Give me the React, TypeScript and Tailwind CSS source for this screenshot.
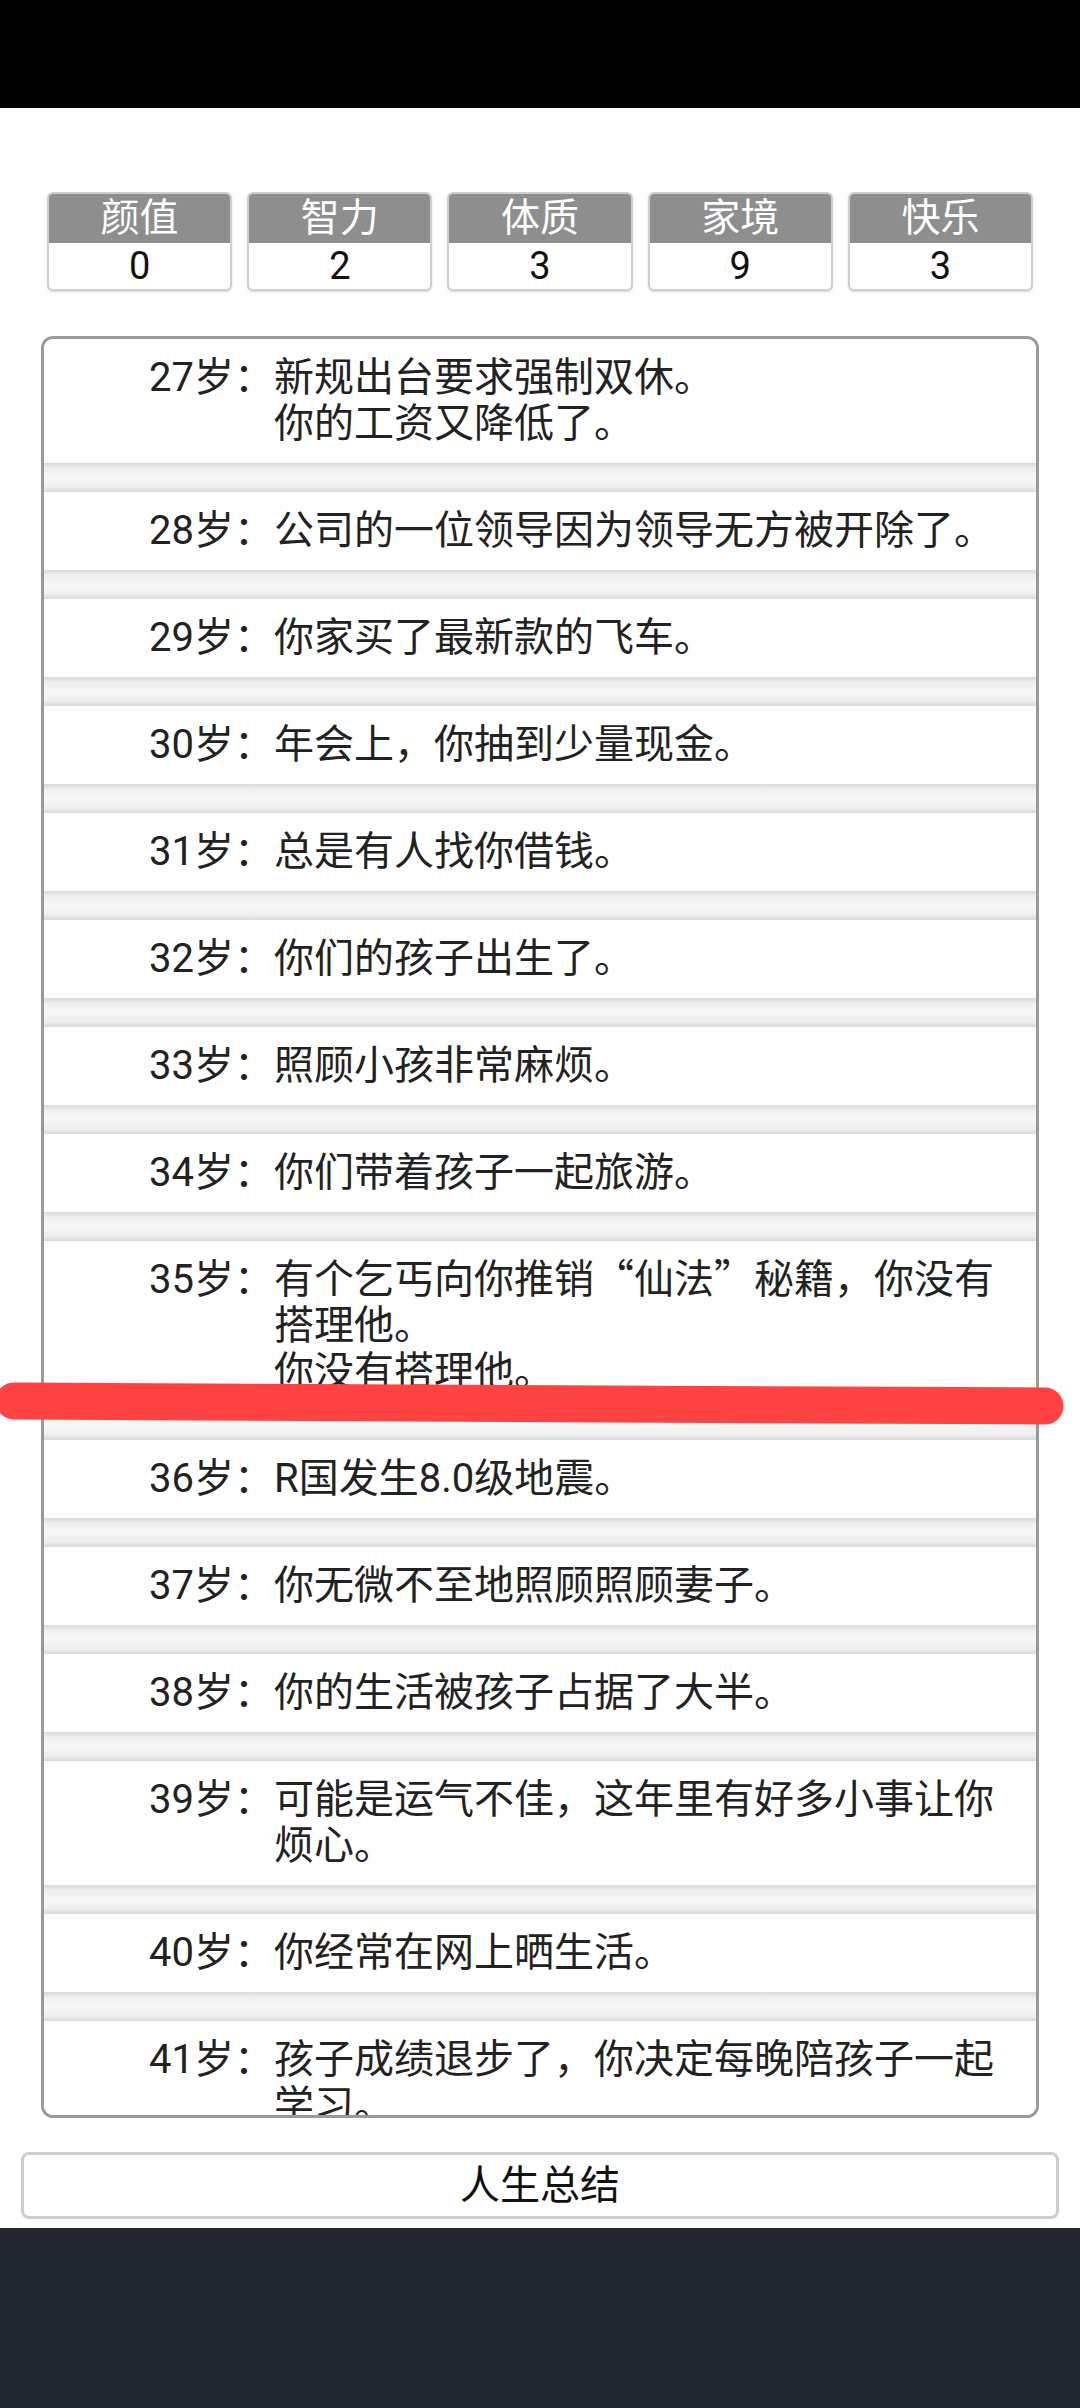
import React from 'react';

type Stat = { label: string; value: number };

type LogItem = { age: number; lines: string[] };

const stats: Stat[] = [
  { label: '颜值', value: 0 },
  { label: '智力', value: 2 },
  { label: '体质', value: 3 },
  { label: '家境', value: 9 },
  { label: '快乐', value: 3 },
];

const log: LogItem[] = [
  { age: 27, lines: ['新规出台要求强制双休。', '你的工资又降低了。'] },
  { age: 28, lines: ['公司的一位领导因为领导无方被开除了。'] },
  { age: 29, lines: ['你家买了最新款的飞车。'] },
  { age: 30, lines: ['年会上，你抽到少量现金。'] },
  { age: 31, lines: ['总是有人找你借钱。'] },
  { age: 32, lines: ['你们的孩子出生了。'] },
  { age: 33, lines: ['照顾小孩非常麻烦。'] },
  { age: 34, lines: ['你们带着孩子一起旅游。'] },
  { age: 35, lines: ['有个乞丐向你推销“仙法”秘籍，你没有搭理他。', '你没有搭理他。'] },
  { age: 36, lines: ['R国发生8.0级地震。'] },
  { age: 37, lines: ['你无微不至地照顾照顾妻子。'] },
  { age: 38, lines: ['你的生活被孩子占据了大半。'] },
  { age: 39, lines: ['可能是运气不佳，这年里有好多小事让你烦心。'] },
  { age: 40, lines: ['你经常在网上晒生活。'] },
  { age: 41, lines: ['孩子成绩退步了，你决定每晚陪孩子一起学习。'] },
];

const font = { fontFamily: 'Roboto, "Noto Sans CJK SC", sans-serif' };
const cjk = { fontFamily: '"Noto Sans CJK SC", sans-serif' };

// 弯引号用中文字体显示为全角
function Line({ text }: { text: string }) {
  const parts = text.split(/([“”])/);
  return (
    <div>
      {parts.map((p, i) =>
        p === '“' || p === '”' ? (
          <span key={i} className="leading-[0]" style={cjk}>
            {p}
          </span>
        ) : (
          <React.Fragment key={i}>{p}</React.Fragment>
        )
      )}
    </div>
  );
}

function StatBox({ stat }: { stat: Stat }) {
  return (
    <div className="flex-1 rounded-[6px] border-2 border-[#cfcfcf] overflow-hidden bg-white shadow-[0_1px_2px_rgba(0,0,0,0.15)]">
      <div className="h-[49px] bg-[#8e8e8e] text-white text-[39px] leading-[49px] text-center">{stat.label}</div>
      <div className="h-[46px] text-[#111] text-[38px] leading-[46px] text-center">{stat.value}</div>
    </div>
  );
}

function Separator() {
  return (
    <div className="h-[29px] shrink-0 bg-[linear-gradient(to_bottom,#d9d9d9_0%,#efefef_18%,#f7f7f7_50%,#efefef_82%,#d9d9d9_100%)]" />
  );
}

export default function App() {
  return (
    <div className="relative min-h-[2408px] flex flex-col bg-white text-[#222]" style={font}>
      <div className="h-[108px] bg-black shrink-0" />

      {/* 属性 */}
      <div className="mt-[84px] px-[47px] flex gap-[15px]">
        {stats.map((s) => (
          <StatBox key={s.label} stat={s} />
        ))}
      </div>

      {/* 人生记录 */}
      <div className="mt-[45px] mx-[41px] h-[1782px] rounded-[12px] border-[3px] border-[#9a9a9a] overflow-hidden flex flex-col">
        {log.map((item, i) => (
          <React.Fragment key={item.age}>
            {i > 0 && <Separator />}
            <div className="flex shrink-0 bg-white py-4 text-[40px] leading-[46px]">
              <div className="w-[230px] shrink-0 text-right">{item.age}岁：</div>
              <div className="flex-1 pr-[24px]">
                {item.lines.map((l, j) => (
                  <Line key={j} text={l} />
                ))}
              </div>
            </div>
          </React.Fragment>
        ))}
      </div>

      <button className="mt-[34px] mx-[21px] h-[67px] rounded-[8px] border-[3px] border-[#cdcdcd] bg-white text-[40px] leading-none text-[#111] shrink-0">
        人生总结
      </button>

      <div className="mt-[9px] flex-1 bg-[#21262f]" />

      {/* 红色划线标记 */}
      <svg className="absolute left-0 top-0 pointer-events-none" width="1080" height="1440" viewBox="0 0 1080 1440">
        <line x1="14" y1="1401" x2="1045" y2="1406" stroke="#ff4343" strokeWidth="37" strokeLinecap="round" />
      </svg>
    </div>
  );
}
